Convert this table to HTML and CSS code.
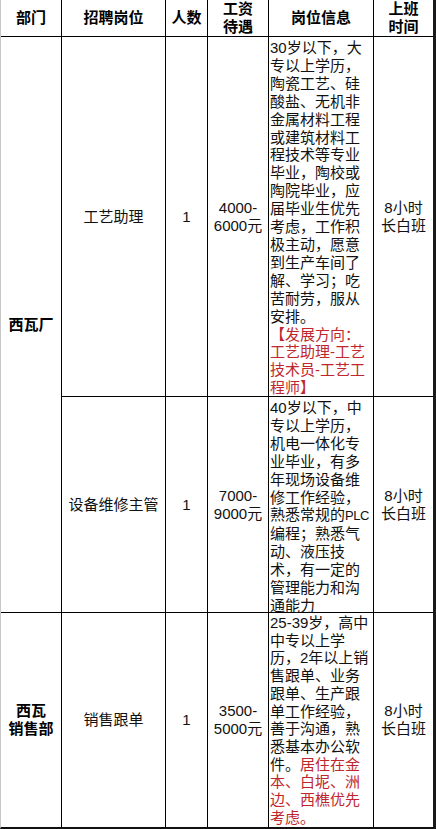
FILE: index.html
```html
<!DOCTYPE html>
<html lang="zh-CN">
<head>
<meta charset="utf-8">
<title>招聘岗位</title>
<link rel="stylesheet" href="styles.css">
</head>
<body>
<div class="sheet">
  <div class="cell head">部门</div>
  <div class="cell head">招聘岗位</div>
  <div class="cell head">人数</div>
  <div class="cell head">工资<br>待遇</div>
  <div class="cell head">岗位信息</div>
  <div class="cell head">上班<br>时间</div>

  <div class="cell dept span2">西瓦厂</div>
  <div class="cell">工艺助理</div>
  <div class="cell">1</div>
  <div class="cell">4000-<br>6000元</div>
  <div class="cell info">30岁以下，大<br>专以上学历，<br>陶瓷工艺、硅<br>酸盐、无机非<br>金属材料工程<br>或建筑材料工<br>程技术等专业<br>毕业，陶校或<br>陶院毕业，应<br>届毕业生优先<br>考虑，工作积<br>极主动，愿意<br>到生产车间了<br>解、学习；吃<br>苦耐劳，服从<br>安排。<br><span class="red">【发展方向：<br>工艺助理-工艺<br>技术员-工艺工<br>程师】</span></div>
  <div class="cell">8小时<br>长白班</div>

  <div class="cell">设备维修主管</div>
  <div class="cell">1</div>
  <div class="cell">7000-<br>9000元</div>
  <div class="cell info">40岁以下，中<br>专以上学历，<br>机电一体化专<br>业毕业，有多<br>年现场设备维<br>修工作经验，<br>熟悉常规的<span class="latin">PLC</span><br>编程；熟悉气<br>动、液压技<br>术，有一定的<br>管理能力和沟<br>通能力</div>
  <div class="cell">8小时<br>长白班</div>

  <div class="cell dept">西瓦<br>销售部</div>
  <div class="cell">销售跟单</div>
  <div class="cell">1</div>
  <div class="cell">3500-<br>5000元</div>
  <div class="cell info info-tight">25-39岁，高中<br>中专以上学<br>历，2年以上销<br>售跟单、业务<br>跟单、生产跟<br>单工作经验，<br>善于沟通，熟<br>悉基本办公软<br>件。<span class="red">居住在金<br>本、白坭、洲<br>边、西樵优先<br>考虑。</span></div>
  <div class="cell">8小时<br>长白班</div>
</div>
</body>
</html>
```

FILE: styles.css
```css
html, body {
  margin: 0;
  padding: 0;
  background: #ffffff;
}

body {
  font-family: "Liberation Sans", "Noto Sans CJK SC", sans-serif;
  font-size: 15px;
  color: #111;
}

.sheet {
  display: grid;
  grid-template-columns: 60px 103px 41px 60px 104px 59px;
  grid-template-rows: 36px 359px 215px 214px;
  gap: 1px;
  background: #000;
  border-left: 1px solid #c8c8c8;
  border-right: 3px solid #1a1a1a;
  border-bottom: 2px solid #111;
  width: 432px;
}

.cell {
  background: #fff;
  display: flex;
  align-items: center;
  justify-content: center;
  text-align: center;
  line-height: 18px;
  white-space: nowrap;
}

.head {
  font-weight: 700;
  color: #000;
}

.dept {
  font-weight: 700;
  color: #000;
}

.span2 {
  grid-row: span 2;
}

.info {
  display: block;
  text-align: left;
  padding: 2px 0 0 1px;
  line-height: 17.9px;
}

.info-tight {
  padding-top: 1px;
  line-height: 17.7px;
}

.red {
  color: #c0262c;
}

.latin {
  font-size: 13px;
  letter-spacing: -0.5px;
}
```
